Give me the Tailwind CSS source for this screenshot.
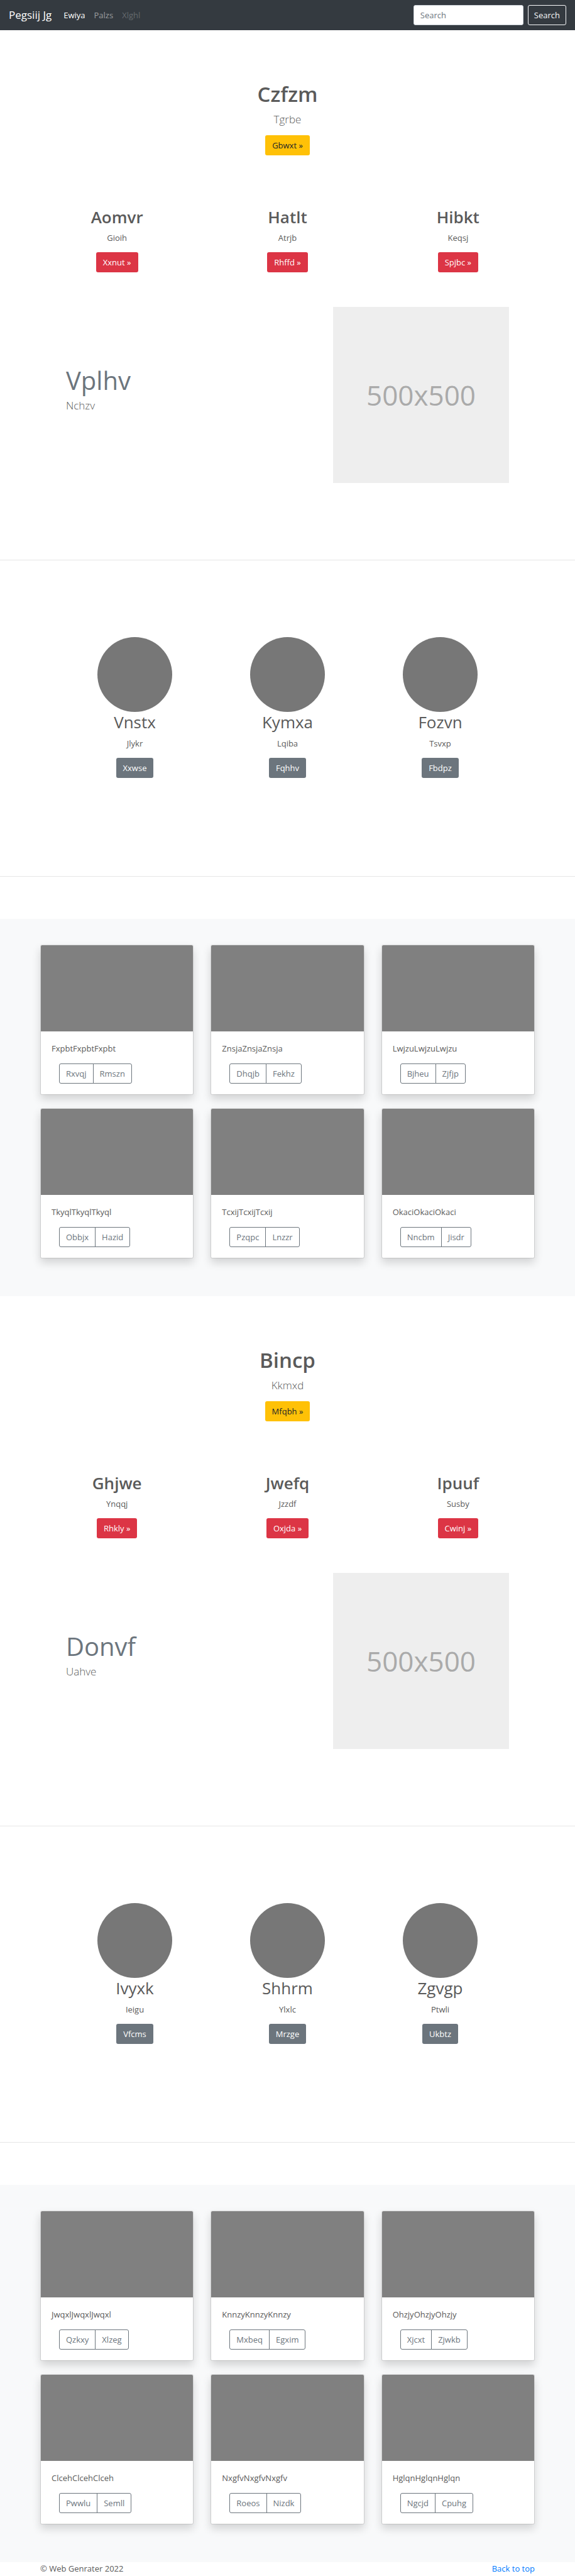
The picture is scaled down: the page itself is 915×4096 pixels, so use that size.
<!DOCTYPE html>
<html lang="en">
<head>
<meta charset="utf-8">
<meta name="viewport" content="width=device-width, initial-scale=1">
<title>Pegsiij Jg</title>
<script src="https://cdn.jsdelivr.net/npm/@tailwindcss/browser@4"></script>
</head>
<body id="top" class="bg-white font-['Open_Sans','Noto_Sans',sans-serif] text-[13px] leading-5 text-[#5a5a5a]">
<header>
  <nav class="flex items-center bg-[#343a40] px-3.5 py-2">
    <a href="#" class="mr-3 text-[17px] leading-6 text-white">Pegsiij Jg</a>
    <div class="flex flex-1">
      <a href="#" class="px-[7px] text-white">Ewiya</a>
      <a href="#" class="px-[7px] text-white/50">Palzs</a>
      <a href="#" aria-disabled="true" class="px-[7px] text-white/25">Xlghl</a>
    </div>
    <form class="flex gap-[7px]" onsubmit="return false">
      <input type="search" placeholder="Search" aria-label="Search" class="h-8 w-[175px] rounded-[3px] border border-[#ced4da] bg-white px-2.5 text-[#495057] placeholder:text-[#6c757d]">
      <button type="submit" class="h-8 rounded-[3px] border border-[#f8f9fa] px-[9px] text-[#f8f9fa]">Search</button>
    </form>
  </nav>
</header>

<main>
  <section class="flex flex-col items-center pt-[81px]">
    <h1 class="text-[33px] leading-[41px] font-semibold">Czfzm</h1>
    <p class="mt-[7px] text-[17px] leading-[25px] font-light">Tgrbe</p>
    <a href="#" class="mt-[13px] flex h-8 items-center rounded-[3px] bg-[#ffc107] px-[11px] text-[#212529]">Gbwxt »</a>
  </section>

  <section class="mx-auto mt-[82px] grid max-w-[787px] grid-cols-3 gap-[27px]">
    <div class="flex flex-col items-center">
      <h2 class="text-[26px] leading-8 font-semibold">Aomvr</h2>
      <p class="mt-[7px]">Gioih</p>
      <a href="#" class="mt-[13px] flex h-8 items-center rounded-[3px] bg-[#dc3545] px-[11px] text-white">Xxnut »</a>
    </div>
    <div class="flex flex-col items-center">
      <h2 class="text-[26px] leading-8 font-semibold">Hatlt</h2>
      <p class="mt-[7px]">Atrjb</p>
      <a href="#" class="mt-[13px] flex h-8 items-center rounded-[3px] bg-[#dc3545] px-[11px] text-white">Rhffd »</a>
    </div>
    <div class="flex flex-col items-center">
      <h2 class="text-[26px] leading-8 font-semibold">Hibkt</h2>
      <p class="mt-[7px]">Keqsj</p>
      <a href="#" class="mt-[13px] flex h-8 items-center rounded-[3px] bg-[#dc3545] px-[11px] text-white">Spjbc »</a>
    </div>
  </section>

  <section class="mx-auto mt-[55px] flex max-w-[705px] justify-between">
    <div class="pt-[92px]">
      <h2 class="text-[40px] leading-[50px] text-[#6c757d]">Vplhv</h2>
      <p class="mt-0.5 text-[17px] leading-[25px] font-light">Nchzv</p>
    </div>
    <div class="flex size-[280px] items-center justify-center bg-[#eee] text-[44px] text-[#aaa]">500x500</div>
  </section>

  <hr class="mt-[122px] border-[#e6e6e6]">

  <section class="mx-auto mt-[122px] grid max-w-[729px] grid-cols-3">
    <div class="flex flex-col items-center">
      <div class="size-[119px] rounded-full bg-[#777]"></div>
      <h2 class="text-[26px] leading-8">Vnstx</h2>
      <p class="mt-2">Jlykr</p>
      <a href="#" class="mt-[13px] flex h-8 items-center rounded-[3px] bg-[#6c757d] px-[11px] text-white">Xxwse</a>
    </div>
    <div class="flex flex-col items-center">
      <div class="size-[119px] rounded-full bg-[#777]"></div>
      <h2 class="text-[26px] leading-8">Kymxa</h2>
      <p class="mt-2">Lqiba</p>
      <a href="#" class="mt-[13px] flex h-8 items-center rounded-[3px] bg-[#6c757d] px-[11px] text-white">Fqhhv</a>
    </div>
    <div class="flex flex-col items-center">
      <div class="size-[119px] rounded-full bg-[#777]"></div>
      <h2 class="text-[26px] leading-8">Fozvn</h2>
      <p class="mt-2">Tsvxp</p>
      <a href="#" class="mt-[13px] flex h-8 items-center rounded-[3px] bg-[#6c757d] px-[11px] text-white">Fbdpz</a>
    </div>
  </section>

  <hr class="mt-[156px] border-[#e6e6e6]">

  <section class="mt-[67px] bg-[#f8f9fa] pt-[41px] pb-[60px]">
    <div class="mx-auto grid max-w-[787px] grid-cols-3 gap-x-[27px] gap-y-[21px]">
      <article class="overflow-hidden rounded-[3px] border border-black/10 bg-white bg-clip-padding shadow-[0_7px_14px_rgba(0,0,0,0.15)]">
        <div class="h-[137px] bg-[gray]"></div>
        <div class="p-[17px]">
          <p>FxpbtFxpbtFxpbt</p>
          <div class="mt-3.5 ml-3 flex text-[#6c757d]">
            <button type="button" class="h-8 rounded-l-[3px] border border-[#6c757d] px-2.5">Rxvqj</button>
            <button type="button" class="-ml-px h-8 rounded-r-[3px] border border-[#6c757d] px-2.5">Rmszn</button>
          </div>
        </div>
      </article>
      <article class="overflow-hidden rounded-[3px] border border-black/10 bg-white bg-clip-padding shadow-[0_7px_14px_rgba(0,0,0,0.15)]">
        <div class="h-[137px] bg-[gray]"></div>
        <div class="p-[17px]">
          <p>ZnsjaZnsjaZnsja</p>
          <div class="mt-3.5 ml-3 flex text-[#6c757d]">
            <button type="button" class="h-8 rounded-l-[3px] border border-[#6c757d] px-2.5">Dhqjb</button>
            <button type="button" class="-ml-px h-8 rounded-r-[3px] border border-[#6c757d] px-2.5">Fekhz</button>
          </div>
        </div>
      </article>
      <article class="overflow-hidden rounded-[3px] border border-black/10 bg-white bg-clip-padding shadow-[0_7px_14px_rgba(0,0,0,0.15)]">
        <div class="h-[137px] bg-[gray]"></div>
        <div class="p-[17px]">
          <p>LwjzuLwjzuLwjzu</p>
          <div class="mt-3.5 ml-3 flex text-[#6c757d]">
            <button type="button" class="h-8 rounded-l-[3px] border border-[#6c757d] px-2.5">Bjheu</button>
            <button type="button" class="-ml-px h-8 rounded-r-[3px] border border-[#6c757d] px-2.5">Zjfjp</button>
          </div>
        </div>
      </article>
      <article class="overflow-hidden rounded-[3px] border border-black/10 bg-white bg-clip-padding shadow-[0_7px_14px_rgba(0,0,0,0.15)]">
        <div class="h-[137px] bg-[gray]"></div>
        <div class="p-[17px]">
          <p>TkyqlTkyqlTkyql</p>
          <div class="mt-3.5 ml-3 flex text-[#6c757d]">
            <button type="button" class="h-8 rounded-l-[3px] border border-[#6c757d] px-2.5">Obbjx</button>
            <button type="button" class="-ml-px h-8 rounded-r-[3px] border border-[#6c757d] px-2.5">Hazid</button>
          </div>
        </div>
      </article>
      <article class="overflow-hidden rounded-[3px] border border-black/10 bg-white bg-clip-padding shadow-[0_7px_14px_rgba(0,0,0,0.15)]">
        <div class="h-[137px] bg-[gray]"></div>
        <div class="p-[17px]">
          <p>TcxijTcxijTcxij</p>
          <div class="mt-3.5 ml-3 flex text-[#6c757d]">
            <button type="button" class="h-8 rounded-l-[3px] border border-[#6c757d] px-2.5">Pzqpc</button>
            <button type="button" class="-ml-px h-8 rounded-r-[3px] border border-[#6c757d] px-2.5">Lnzzr</button>
          </div>
        </div>
      </article>
      <article class="overflow-hidden rounded-[3px] border border-black/10 bg-white bg-clip-padding shadow-[0_7px_14px_rgba(0,0,0,0.15)]">
        <div class="h-[137px] bg-[gray]"></div>
        <div class="p-[17px]">
          <p>OkaciOkaciOkaci</p>
          <div class="mt-3.5 ml-3 flex text-[#6c757d]">
            <button type="button" class="h-8 rounded-l-[3px] border border-[#6c757d] px-2.5">Nncbm</button>
            <button type="button" class="-ml-px h-8 rounded-r-[3px] border border-[#6c757d] px-2.5">Jisdr</button>
          </div>
        </div>
      </article>
    </div>
  </section>

  <section class="flex flex-col items-center pt-[81px]">
    <h1 class="text-[33px] leading-[41px] font-semibold">Bincp</h1>
    <p class="mt-[7px] text-[17px] leading-[25px] font-light">Kkmxd</p>
    <a href="#" class="mt-[13px] flex h-8 items-center rounded-[3px] bg-[#ffc107] px-[11px] text-[#212529]">Mfqbh »</a>
  </section>

  <section class="mx-auto mt-[82px] grid max-w-[787px] grid-cols-3 gap-[27px]">
    <div class="flex flex-col items-center">
      <h2 class="text-[26px] leading-8 font-semibold">Ghjwe</h2>
      <p class="mt-[7px]">Ynqqj</p>
      <a href="#" class="mt-[13px] flex h-8 items-center rounded-[3px] bg-[#dc3545] px-[11px] text-white">Rhkly »</a>
    </div>
    <div class="flex flex-col items-center">
      <h2 class="text-[26px] leading-8 font-semibold">Jwefq</h2>
      <p class="mt-[7px]">Jzzdf</p>
      <a href="#" class="mt-[13px] flex h-8 items-center rounded-[3px] bg-[#dc3545] px-[11px] text-white">Oxjda »</a>
    </div>
    <div class="flex flex-col items-center">
      <h2 class="text-[26px] leading-8 font-semibold">Ipuuf</h2>
      <p class="mt-[7px]">Susby</p>
      <a href="#" class="mt-[13px] flex h-8 items-center rounded-[3px] bg-[#dc3545] px-[11px] text-white">Cwinj »</a>
    </div>
  </section>

  <section class="mx-auto mt-[55px] flex max-w-[705px] justify-between">
    <div class="pt-[92px]">
      <h2 class="text-[40px] leading-[50px] text-[#6c757d]">Donvf</h2>
      <p class="mt-0.5 text-[17px] leading-[25px] font-light">Uahve</p>
    </div>
    <div class="flex size-[280px] items-center justify-center bg-[#eee] text-[44px] text-[#aaa]">500x500</div>
  </section>

  <hr class="mt-[122px] border-[#e6e6e6]">

  <section class="mx-auto mt-[122px] grid max-w-[729px] grid-cols-3">
    <div class="flex flex-col items-center">
      <div class="size-[119px] rounded-full bg-[#777]"></div>
      <h2 class="text-[26px] leading-8">Ivyxk</h2>
      <p class="mt-2">Ieigu</p>
      <a href="#" class="mt-[13px] flex h-8 items-center rounded-[3px] bg-[#6c757d] px-[11px] text-white">Vfcms</a>
    </div>
    <div class="flex flex-col items-center">
      <div class="size-[119px] rounded-full bg-[#777]"></div>
      <h2 class="text-[26px] leading-8">Shhrm</h2>
      <p class="mt-2">Ylxlc</p>
      <a href="#" class="mt-[13px] flex h-8 items-center rounded-[3px] bg-[#6c757d] px-[11px] text-white">Mrzge</a>
    </div>
    <div class="flex flex-col items-center">
      <div class="size-[119px] rounded-full bg-[#777]"></div>
      <h2 class="text-[26px] leading-8">Zgvgp</h2>
      <p class="mt-2">Ptwli</p>
      <a href="#" class="mt-[13px] flex h-8 items-center rounded-[3px] bg-[#6c757d] px-[11px] text-white">Ukbtz</a>
    </div>
  </section>

  <hr class="mt-[156px] border-[#e6e6e6]">

  <section class="mt-[67px] bg-[#f8f9fa] pt-[41px] pb-[60px]">
    <div class="mx-auto grid max-w-[787px] grid-cols-3 gap-x-[27px] gap-y-[21px]">
      <article class="overflow-hidden rounded-[3px] border border-black/10 bg-white bg-clip-padding shadow-[0_7px_14px_rgba(0,0,0,0.15)]">
        <div class="h-[137px] bg-[gray]"></div>
        <div class="p-[17px]">
          <p>JwqxlJwqxlJwqxl</p>
          <div class="mt-3.5 ml-3 flex text-[#6c757d]">
            <button type="button" class="h-8 rounded-l-[3px] border border-[#6c757d] px-2.5">Qzkxy</button>
            <button type="button" class="-ml-px h-8 rounded-r-[3px] border border-[#6c757d] px-2.5">Xlzeg</button>
          </div>
        </div>
      </article>
      <article class="overflow-hidden rounded-[3px] border border-black/10 bg-white bg-clip-padding shadow-[0_7px_14px_rgba(0,0,0,0.15)]">
        <div class="h-[137px] bg-[gray]"></div>
        <div class="p-[17px]">
          <p>KnnzyKnnzyKnnzy</p>
          <div class="mt-3.5 ml-3 flex text-[#6c757d]">
            <button type="button" class="h-8 rounded-l-[3px] border border-[#6c757d] px-2.5">Mxbeq</button>
            <button type="button" class="-ml-px h-8 rounded-r-[3px] border border-[#6c757d] px-2.5">Egxim</button>
          </div>
        </div>
      </article>
      <article class="overflow-hidden rounded-[3px] border border-black/10 bg-white bg-clip-padding shadow-[0_7px_14px_rgba(0,0,0,0.15)]">
        <div class="h-[137px] bg-[gray]"></div>
        <div class="p-[17px]">
          <p>OhzjyOhzjyOhzjy</p>
          <div class="mt-3.5 ml-3 flex text-[#6c757d]">
            <button type="button" class="h-8 rounded-l-[3px] border border-[#6c757d] px-2.5">Xjcxt</button>
            <button type="button" class="-ml-px h-8 rounded-r-[3px] border border-[#6c757d] px-2.5">Zjwkb</button>
          </div>
        </div>
      </article>
      <article class="overflow-hidden rounded-[3px] border border-black/10 bg-white bg-clip-padding shadow-[0_7px_14px_rgba(0,0,0,0.15)]">
        <div class="h-[137px] bg-[gray]"></div>
        <div class="p-[17px]">
          <p>ClcehClcehClceh</p>
          <div class="mt-3.5 ml-3 flex text-[#6c757d]">
            <button type="button" class="h-8 rounded-l-[3px] border border-[#6c757d] px-2.5">Pwwlu</button>
            <button type="button" class="-ml-px h-8 rounded-r-[3px] border border-[#6c757d] px-2.5">Semll</button>
          </div>
        </div>
      </article>
      <article class="overflow-hidden rounded-[3px] border border-black/10 bg-white bg-clip-padding shadow-[0_7px_14px_rgba(0,0,0,0.15)]">
        <div class="h-[137px] bg-[gray]"></div>
        <div class="p-[17px]">
          <p>NxgfvNxgfvNxgfv</p>
          <div class="mt-3.5 ml-3 flex text-[#6c757d]">
            <button type="button" class="h-8 rounded-l-[3px] border border-[#6c757d] px-2.5">Roeos</button>
            <button type="button" class="-ml-px h-8 rounded-r-[3px] border border-[#6c757d] px-2.5">Nizdk</button>
          </div>
        </div>
      </article>
      <article class="overflow-hidden rounded-[3px] border border-black/10 bg-white bg-clip-padding shadow-[0_7px_14px_rgba(0,0,0,0.15)]">
        <div class="h-[137px] bg-[gray]"></div>
        <div class="p-[17px]">
          <p>HglqnHglqnHglqn</p>
          <div class="mt-3.5 ml-3 flex text-[#6c757d]">
            <button type="button" class="h-8 rounded-l-[3px] border border-[#6c757d] px-2.5">Ngcjd</button>
            <button type="button" class="-ml-px h-8 rounded-r-[3px] border border-[#6c757d] px-2.5">Cpuhg</button>
          </div>
        </div>
      </article>
    </div>
  </section>
</main>

<footer class="mx-auto flex max-w-[787px] justify-between pb-0.5">
  <p>© Web Genrater 2022</p>
  <a href="#top" class="text-[#007bff]">Back to top</a>
</footer>
</body>
</html>
